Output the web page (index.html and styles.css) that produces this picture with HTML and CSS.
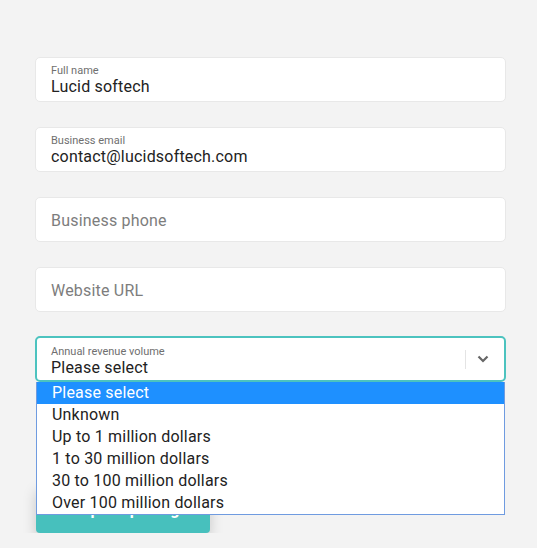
FILE: index.html
```html
<!DOCTYPE html>
<html>
<head>
<meta charset="utf-8">
<link rel="stylesheet" href="styles.css">
</head>
<body>
<form class="form">
  <div class="field">
    <span class="label">Full name</span>
    <span class="value">Lucid softech</span>
  </div>
  <div class="field">
    <span class="label">Business email</span>
    <span class="value">contact@lucidsoftech.com</span>
  </div>
  <div class="field placeholder">
    <span class="ph">Business phone</span>
  </div>
  <div class="field placeholder">
    <span class="ph">Website URL</span>
  </div>
  <div class="select-wrap">
    <div class="field select">
      <div class="select-text">
        <span class="label">Annual revenue volume</span>
        <span class="value">Please select</span>
      </div>
      <div class="divider"></div>
      <svg class="chev" width="12" height="8" viewBox="0 0 12 8"><path d="M1.5 1.5 L6 6 L10.5 1.5" fill="none" stroke="#666" stroke-width="2.2"/></svg>
    </div>
    <ul class="options">
      <li class="active">Please select</li>
      <li>Unknown</li>
      <li>Up to 1 million dollars</li>
      <li>1 to 30 million dollars</li>
      <li>30 to 100 million dollars</li>
      <li>Over 100 million dollars</li>
    </ul>
  </div>
  <button type="button" class="btn">Request pricing</button>
</form>
</body>
</html>
```
FILE: styles.css
```css
html, body {
  margin: 0;
  padding: 0;
  background: #f3f3f3;
  font-family: Roboto, "Liberation Sans", sans-serif;
}
.form {
  display: flex;
  flex-direction: column;
  gap: 25px;
  width: 471px;
  padding: 57px 0 0 35px;
  box-sizing: content-box;
}
.field {
  height: 45px;
  box-sizing: border-box;
  background: #fff;
  border: 1px solid #e8e8e8;
  border-radius: 5px;
  padding: 5px 16px 0 15px;
  display: flex;
  flex-direction: column;
}
.label {
  font-size: 11px;
  line-height: 13px;
  color: #6f6f6f;
  margin-top: 1px;
}
.value {
  font-size: 16px;
  line-height: 19px;
  letter-spacing: 0.2px;
  color: #222;
}
.placeholder {
  justify-content: center;
  padding-top: 1px;
}
.ph {
  font-size: 16px;
  letter-spacing: 0.2px;
  color: #7d7d7d;
}
.select-wrap {
  position: relative;
  margin-top: -1px;
}
.select {
  border: 2px solid #4cc3bf;
  flex-direction: row;
  align-items: stretch;
  padding: 0 0 0 14px;
  height: 46px;
  border-radius: 5px;
}
.select-text {
  flex: 1;
  display: flex;
  flex-direction: column;
  padding-top: 6px;
}
.divider {
  width: 1px;
  background: #e4e4e4;
  margin: 12px 0 11px;
}
.chev {
  align-self: center;
  margin: 0 15px 0 11px;
}
.options {
  position: absolute;
  left: 1px;
  top: 46px;
  width: 469px;
  margin: 0;
  padding: 0;
  list-style: none;
  background: #fff;
  border: 1px solid #6f9be0;
  border-top: none;
  box-sizing: border-box;
  z-index: 2;
}
.options li {
  height: 22px;
  line-height: 22px;
  font-size: 16px;
  letter-spacing: 0.2px;
  padding-left: 15px;
  color: #222;
}
.options li.active {
  background: #1e90ff;
  color: #fff;
}
.btn {
  width: 174px;
  height: 48px;
  margin: 78px 0 0 1px;
  border: none;
  border-radius: 4px;
  background: #47c0bd;
  color: #fff;
  font-family: Roboto, "Liberation Sans", sans-serif;
  font-weight: 700;
  font-size: 16px;
  box-shadow: 0 6px 14px rgba(0,0,0,0.18);
}
```
